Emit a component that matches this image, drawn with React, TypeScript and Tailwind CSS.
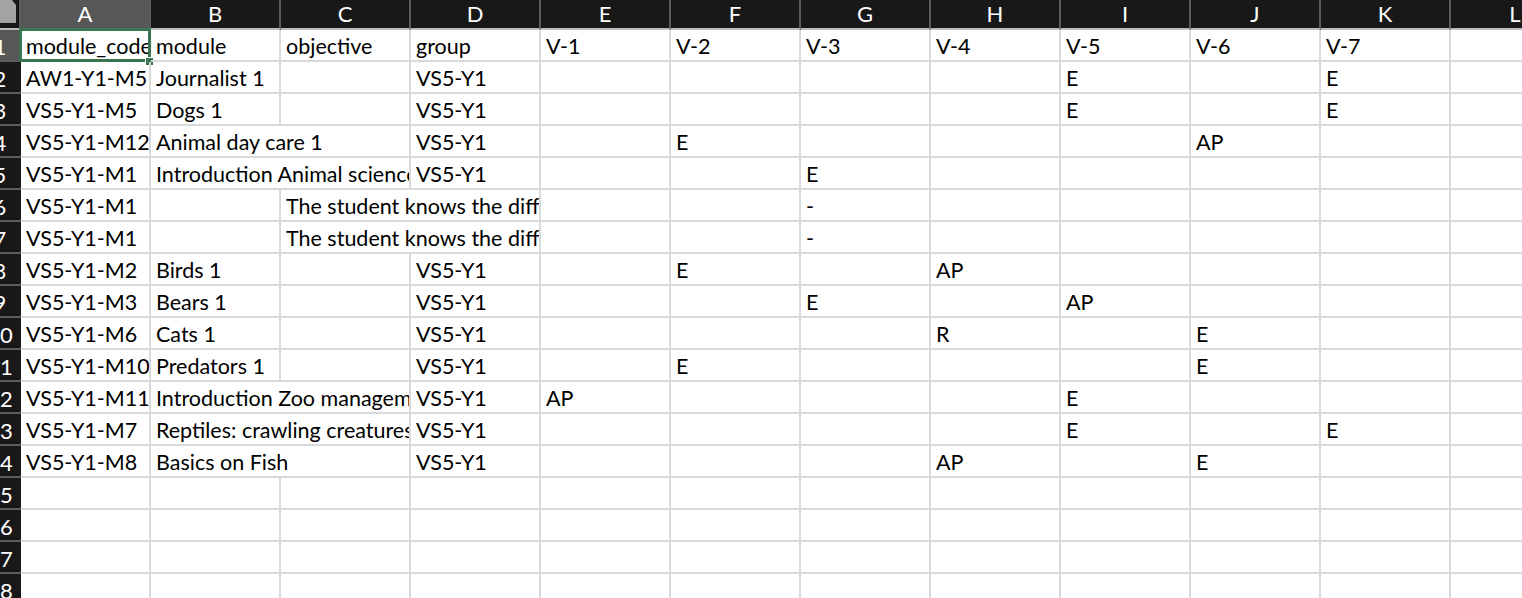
import React from 'react';

// Feuille de calcul : colonnes A..L, cellules de 130px, lignes de 32px
type Cell = string | [string, number];

const COLS = ['A', 'B', 'C', 'D', 'E', 'F', 'G', 'H', 'I', 'J', 'K', 'L'];

const ROWS: Cell[][] = [
  ['module_code', 'module', 'objective', 'group', 'V-1', 'V-2', 'V-3', 'V-4', 'V-5', 'V-6', 'V-7', ''],
  ['AW1-Y1-M5', 'Journalist 1', '', 'VS5-Y1', '', '', '', '', 'E', '', 'E', ''],
  ['VS5-Y1-M5', 'Dogs 1', '', 'VS5-Y1', '', '', '', '', 'E', '', 'E', ''],
  ['VS5-Y1-M12', ['Animal day care 1', 2], 'VS5-Y1', '', 'E', '', '', '', 'AP', '', ''],
  ['VS5-Y1-M1', ['Introduction Animal science', 2], 'VS5-Y1', '', '', 'E', '', '', '', '', ''],
  ['VS5-Y1-M1', '', ['The student knows the difference between animals', 2], '', '', '-', '', '', '', '', ''],
  ['VS5-Y1-M1', '', ['The student knows the difference between species', 2], '', '', '-', '', '', '', '', ''],
  ['VS5-Y1-M2', 'Birds 1', '', 'VS5-Y1', '', 'E', '', 'AP', '', '', '', ''],
  ['VS5-Y1-M3', 'Bears 1', '', 'VS5-Y1', '', '', 'E', '', 'AP', '', '', ''],
  ['VS5-Y1-M6', 'Cats 1', '', 'VS5-Y1', '', '', '', 'R', '', 'E', '', ''],
  ['VS5-Y1-M10', 'Predators 1', '', 'VS5-Y1', '', 'E', '', '', '', 'E', '', ''],
  ['VS5-Y1-M11', ['Introduction Zoo management', 2], 'VS5-Y1', 'AP', '', '', '', 'E', '', '', ''],
  ['VS5-Y1-M7', ['Reptiles: crawling creatures', 2], 'VS5-Y1', '', '', '', '', 'E', '', 'E', ''],
  ['VS5-Y1-M8', ['Basics on Fish', 2], 'VS5-Y1', '', '', '', 'AP', '', 'E', '', ''],
  [], [], [], [],
];

const font = { fontFamily: 'Lato, "Open Sans", sans-serif' };

// Numéros de ligne : la colonne est rognée à gauche, le numéro est centré vers x=0
const RowHeader: React.FC<{ n: number; active?: boolean }> = ({ n, active }) => (
  <div
    className={`h-[32px] flex items-center pt-[2px] overflow-hidden whitespace-nowrap text-white text-[22px] border-b-2 border-[#5c5c5c] ${
      active ? 'bg-[#575757]' : 'bg-[#181818]'
    }`}
  >
    <span className="shrink-0 w-[40px] ml-[-20px] text-center">{n}</span>
  </div>
);

const DataCell: React.FC<{ text: string; span: number; selected?: boolean }> = ({ text, span, selected }) => (
  <div
    className={`relative h-[32px] flex items-center pl-[5px] pt-[2px] whitespace-nowrap text-black text-[21.5px] border-r-2 border-b-2 border-[#d9d9d9] ${
      span === 2 ? 'col-span-2' : ''
    } ${selected ? 'overflow-visible' : 'overflow-hidden'}`}
  >
    <span className="overflow-hidden block w-full">{text}</span>
    {selected && (
      <>
        <div className="absolute left-[-2px] top-[-2px] w-[132px] h-[34px] border-[3px] border-[#3a7550] pointer-events-none" />
        <div className="absolute left-[124px] top-[27px] w-[9px] h-[9px] bg-[#3a7550] border border-white" />
      </>
    )}
  </div>
);

export default function App() {
  return (
    <div className="w-[1522px] h-[598px] overflow-hidden bg-white" style={font}>
      <div className="grid grid-cols-[21px_repeat(12,130px)] w-max">
        {/* coin supérieur gauche */}
        <div className="h-[30px] bg-[#181818] border-b-2 border-[#bdbdbd] relative">
          <svg width="21" height="28" viewBox="0 0 21 28" className="block">
            <rect x="0" y="0" width="21" height="28" fill="#181818" />
            <polygon points="0,0 12,0 16,5 16,23 0,23" fill="#a3a3a3" />
            <rect x="19" y="0" width="2" height="28" fill="#5c5c5c" />
          </svg>
        </div>
        {COLS.map((c, i) => (
          <div
            key={c}
            className={`h-[30px] flex items-center justify-center text-white text-[22px] border-r-2 border-[#5c5c5c] border-b-2 border-b-[#bdbdbd] pb-[2px] ${
              i === 0 ? 'bg-[#575757]' : 'bg-[#181818]'
            }`}
          >
            {c}
          </div>
        ))}

        {ROWS.map((row, r) => {
          const cells: React.ReactNode[] = [<RowHeader key="h" n={r + 1} active={r === 0} />];
          let col = 0;
          let k = 0;
          while (col < 12) {
            const cell = row[k];
            k++;
            const text = cell === undefined ? '' : typeof cell === 'string' ? cell : cell[0];
            const span = Array.isArray(cell) ? cell[1] : 1;
            cells.push(
              <DataCell key={col} text={text} span={span} selected={r === 0 && col === 0} />
            );
            col += span;
          }
          return <React.Fragment key={r}>{cells}</React.Fragment>;
        })}
      </div>
    </div>
  );
}
